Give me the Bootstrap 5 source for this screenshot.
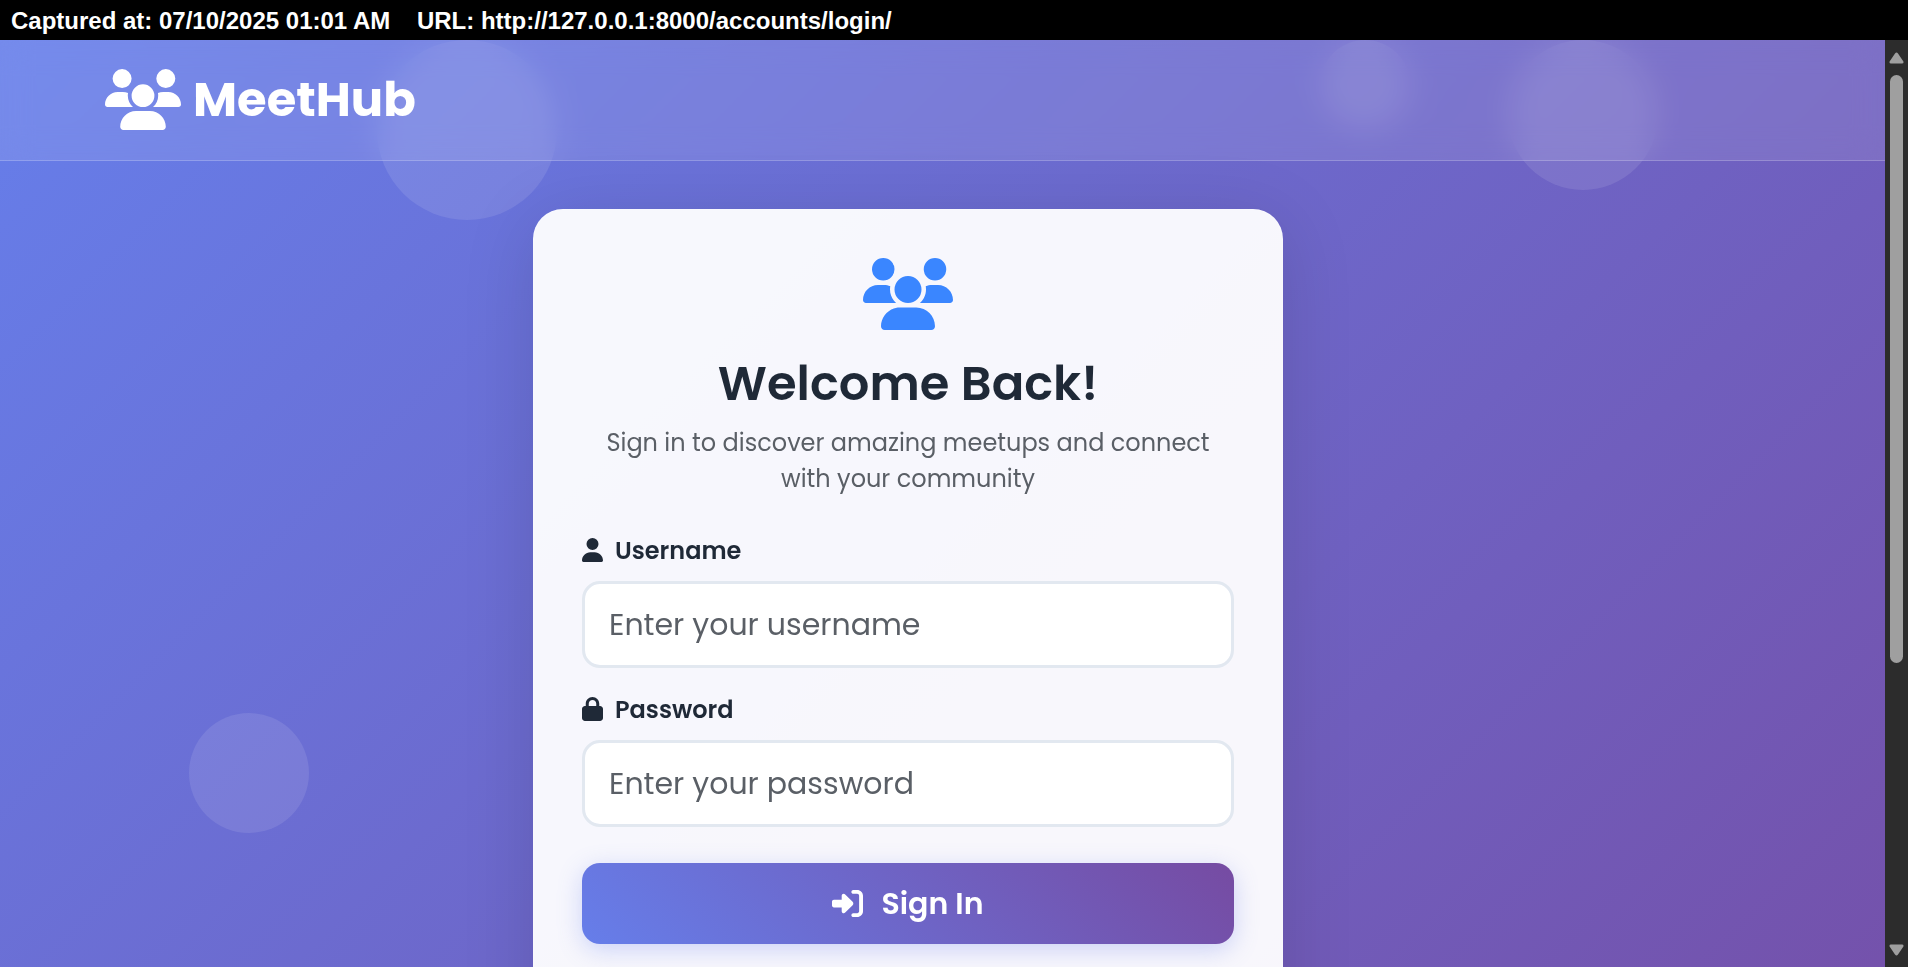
<!DOCTYPE html>
<html lang="en">
<head>
<meta charset="utf-8">
<meta name="viewport" content="width=device-width, initial-scale=1">
<title>MeetHub</title>
<link href="https://cdn.jsdelivr.net/npm/bootstrap@5.3.0/dist/css/bootstrap.min.css" rel="stylesheet">
<style>
  body { font-family: Poppins, Inter, "Open Sans", sans-serif; font-size: 24px; line-height: 36px; color: #1f2937; }
  .capture-bar { height: 40px; padding: 0 11px; background: #000; color: #fff; font: bold 24px/42px "Liberation Sans", Arial, sans-serif; white-space: pre; }
  .viewport-area { min-height: 0; }
  .page-view { min-width: 0; background: linear-gradient(135deg, #667eea 0%, #764ba2 100%) 0 0 / 100% 147% no-repeat; }
  .bubble { position: absolute; border-radius: 50%; background: rgba(255, 255, 255, .1); transform: translateX(-50%); }
  .bubble-a { left: 24.8%; top: 0; width: 180px; height: 180px; }
  .bubble-b { left: 84%; top: 0; width: 150px; height: 150px; }
  .bubble-c { left: 72.4%; top: 0; width: 90px; height: 90px; }
  .bubble-d { left: 13.2%; top: 673px; width: 120px; height: 120px; }
  .site-nav { height: 121px; padding: 0 69px 0 0; background: rgba(255, 255, 255, .1); border-bottom: 1px solid rgba(255, 255, 255, .2); backdrop-filter: blur(15px); }
  .nav-inner { max-width: 1710px; padding: 0 52px; }
  .brand { gap: 12px; font-size: 48px; line-height: 60px; font-weight: 700; color: #fff; text-decoration: none; }
  .login-wrap { padding: 48px 69px 0 0; }
  .login-card { width: 750px; min-height: 1100px; padding: 48px; border: 1px solid rgba(255, 255, 255, .2); border-radius: 30px; background: rgba(255, 255, 255, .95); box-shadow: 0 12px 72px rgba(0, 0, 0, .13); }
  .hero-icon { color: #3a86ff; margin-bottom: 24px; }
  .login-title { font-size: 48px; line-height: 59px; font-weight: 600; margin-bottom: 12px; }
  .login-sub { color: #5a5f66; margin-bottom: 36px; }
  .field { margin-bottom: 24px; }
  .brand svg, .field svg { margin-bottom: 2px; }
  .field .form-label { gap: 12px; font-weight: 600; margin-bottom: 12px; }
  .field .form-control { height: 87px; padding: 0 24px; border: 3px solid #e2e8f0; border-radius: 18px; font-size: 30px; }
  .field .form-control::placeholder { color: #5a5f66; opacity: 1; }
  .sign-btn { height: 81px; margin-top: 36px; gap: 18px; border: 0; border-radius: 18px; color: #fff; font-size: 30px; font-weight: 600; background: linear-gradient(45deg, #667eea 0%, #764ba2 100%); box-shadow: 0 6px 24px rgba(102, 126, 234, .3); }
  .scroll-rail { width: 23px; padding: 12px 0 11px; background: #2c2c2c; color: #9f9f9f; }
  .scroll-thumb { width: 13px; height: 588px; margin-top: 11px; border-radius: 7px; background: #9f9f9f; }
  svg { display: block; flex: none; fill: currentColor; }
</style>
</head>
<body class="vh-100 d-flex flex-column overflow-hidden">
<svg width="0" height="0" class="position-absolute" aria-hidden="true">
  <symbol id="users" viewBox="0 0 640 512"><path d="M144 0a80 80 0 1 1 0 160A80 80 0 1 1 144 0zM512 0a80 80 0 1 1 0 160A80 80 0 1 1 512 0zM0 298.7C0 239.8 47.8 192 106.7 192h42.7c15.9 0 31 3.5 44.6 9.7c-1.3 7.2-1.9 14.7-1.9 22.3c0 38.2 16.8 72.5 43.3 96c-.2 0-.4 0-.7 0H21.3C9.6 320 0 310.4 0 298.7zM405.3 320c-.2 0-.4 0-.7 0c26.6-23.5 43.3-57.8 43.3-96c0-7.6-.7-15-1.9-22.3c13.6-6.3 28.7-9.7 44.6-9.7h42.7C592.2 192 640 239.8 640 298.7c0 11.8-9.6 21.3-21.3 21.3H405.3zM224 224a96 96 0 1 1 192 0 96 96 0 1 1 -192 0zM128 485.3C128 411.7 187.7 352 261.3 352H378.7C452.3 352 512 411.7 512 485.3c0 14.7-11.9 26.7-26.7 26.7H154.7c-14.7 0-26.7-11.9-26.7-26.7z"/></symbol>
</svg>
<div class="capture-bar flex-shrink-0">Captured at: 07/10/2025 01:01 AM    URL: http://127.0.0.1:8000/accounts/login/</div>
<div class="viewport-area d-flex flex-grow-1">
  <div class="page-view position-relative flex-grow-1 overflow-hidden">
    <div class="bubble bubble-a"></div>
    <div class="bubble bubble-b"></div>
    <div class="bubble bubble-c"></div>
    <div class="bubble bubble-d"></div>
    <nav class="site-nav position-relative d-flex align-items-center">
      <div class="nav-inner d-flex w-100 mx-auto">
        <a class="brand d-flex align-items-center" href="#">
          <svg width="76" height="61" aria-hidden="true"><use href="#users"/></svg>
          <span>MeetHub</span>
        </a>
      </div>
    </nav>
    <main class="login-wrap position-relative d-flex justify-content-center">
      <section class="login-card">
        <div class="text-center">
          <svg class="hero-icon mx-auto" width="90" height="72" aria-hidden="true"><use href="#users"/></svg>
          <h1 class="login-title">Welcome Back!</h1>
          <p class="login-sub">Sign in to discover amazing meetups and connect<br>with your community</p>
        </div>
        <form>
          <div class="field">
            <label class="form-label d-flex align-items-center" for="username">
              <svg width="21" height="24" viewBox="0 0 448 512" aria-hidden="true"><path d="M224 256A128 128 0 1 0 224 0a128 128 0 1 0 0 256zm-45.7 48C79.8 304 0 383.8 0 482.3C0 498.7 13.3 512 29.7 512H418.3c16.4 0 29.7-13.3 29.7-29.7C448 383.8 368.2 304 269.7 304H178.3z"/></svg>
              <span>Username</span>
            </label>
            <input class="form-control" type="text" id="username" placeholder="Enter your username">
          </div>
          <div class="field">
            <label class="form-label d-flex align-items-center" for="password">
              <svg width="21" height="24" viewBox="0 0 448 512" aria-hidden="true"><path d="M144 144v48H304V144c0-44.2-35.8-80-80-80s-80 35.8-80 80zM80 192V144C80 64.5 144.5 0 224 0s144 64.5 144 144v48h16c35.3 0 64 28.7 64 64V448c0 35.3-28.7 64-64 64H64c-35.3 0-64-28.7-64-64V256c0-35.3 28.7-64 64-64H80z"/></svg>
              <span>Password</span>
            </label>
            <input class="form-control" type="password" id="password" placeholder="Enter your password">
          </div>
          <button class="sign-btn btn w-100 d-flex align-items-center justify-content-center" type="submit">
            <svg width="31" height="31" viewBox="0 0 512 512" aria-hidden="true"><path d="M217.9 105.9L340.7 228.7c7.2 7.2 11.3 17.1 11.3 27.3s-4.1 20.1-11.3 27.3L217.9 406.1c-6.4 6.4-15 9.9-24 9.9c-18.7 0-33.9-15.2-33.9-33.9l0-62.1L32 320c-17.7 0-32-14.3-32-32l0-64c0-17.7 14.3-32 32-32l128 0 0-62.1c0-18.7 15.2-33.9 33.9-33.9c9 0 17.6 3.6 24 9.9zM352 416l64 0c17.7 0 32-14.3 32-32l0-256c0-17.7-14.3-32-32-32l-64 0c-17.7 0-32-14.3-32-32s14.3-32 32-32l64 0c53 0 96 43 96 96l0 256c0 53-43 96-96 96l-64 0c-17.7 0-32-14.3-32-32s14.3-32 32-32z"/></svg>
            <span>Sign In</span>
          </button>
        </form>
      </section>
    </main>
  </div>
  <div class="scroll-rail d-flex flex-column align-items-center flex-shrink-0" aria-hidden="true">
    <svg width="15" height="12" viewBox="0 0 15 12"><path d="M6 1.6Q7.500 -.6 9 1.600L14.400 9.400Q15 11.500 13 11.500H2Q0 11.500 .6 9.400Z"/></svg>
    <div class="scroll-thumb"></div>
    <svg class="mt-auto" width="15" height="12" viewBox="0 0 15 12"><path d="M6 10.400Q7.500 12.600 9 10.400L14.400 2.600Q15 .5 13 .5H2Q0 .5 .6 2.600Z"/></svg>
  </div>
</div>
<script src="https://cdn.jsdelivr.net/npm/bootstrap@5.3.0/dist/js/bootstrap.bundle.min.js"></script>
</body>
</html>
